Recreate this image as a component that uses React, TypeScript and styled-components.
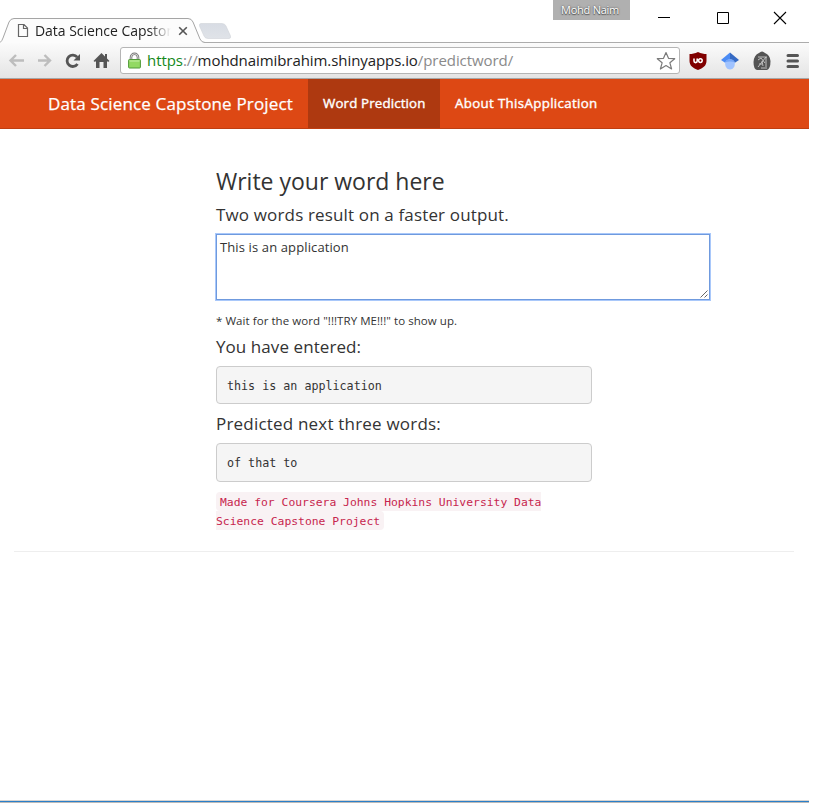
import React from 'react';
import styled, { createGlobalStyle } from 'styled-components';

const GlobalStyle = createGlobalStyle`
  * { box-sizing: border-box; }
  body { margin: 0; background: #fff; font-family: "Open Sans", "Noto Sans", sans-serif; }
  h2, h4, p, pre { margin: 0; font-weight: 400; }
  svg { display: block; flex: none; }
`;

const Window = styled.div`
  width: 809px;
  height: 803px;
  display: flex;
  flex-direction: column;
  background: #fff;
`;

const TitleBar = styled.header`
  height: 43px;
  display: flex;
  justify-content: space-between;
  background: #fff;
  border-bottom: 1px solid #acacac;
`;

const TabStrip = styled.div`
  display: flex;
  position: relative;
  height: 43px;
`;

const TabShape = styled.svg`
  position: absolute;
  left: 0;
  top: 0;
`;

const TabContent = styled.div`
  position: relative;
  display: flex;
  align-items: center;
  width: 203px;
  height: 25px;
  margin-top: 18px;
  padding-left: 17px;
`;

const TabTitle = styled.span`
  width: 136px;
  margin-left: 6px;
  overflow: hidden;
  white-space: nowrap;
  font-size: 14px;
  line-height: 20px;
  letter-spacing: -0.04px;
  color: #222;
  mask-image: linear-gradient(to right, #000 114px, transparent 136px);
`;

const TabClose = styled.svg`
  margin-left: 7px;
`;

const Controls = styled.div`
  display: flex;
  width: 256px;
`;

const UserBadge = styled.div`
  width: 77px;
  height: 20px;
  background: #b0b0b0;
  color: #fff;
  font-size: 11px;
  line-height: 20px;
  letter-spacing: -0.24px;
  padding-left: 8px;
  text-shadow: 0 0 2px #444, 0 1px 1px #555;
  white-space: nowrap;
`;

const WindowButtons = styled.div`
  display: flex;
  gap: 44px;
  padding: 11px 0 0 27px;
`;

const Toolbar = styled.div`
  height: 36px;
  display: flex;
  align-items: center;
  padding: 0 0 0 8px;
  background: linear-gradient(#fbfbfb, #e4e4e4);
  border-bottom: 1px solid #a6a6a6;
`;

const NavIcons = styled.div`
  display: flex;
  flex: none;
  align-items: center;
  gap: 12px;
  width: 112px;
`;

const AddressBar = styled.div`
  flex: none;
  width: 560px;
  height: 27px;
  display: flex;
  align-items: center;
  padding: 0 3px 0 7px;
  background: #fff;
  border: 1px solid #b5b5b5;
  border-radius: 3px;
`;

const Url = styled.span`
  flex: 1;
  margin-left: 6px;
  font-size: 15px;
  line-height: 22px;
  letter-spacing: -0.07px;
  white-space: nowrap;
  color: #222;
  position: relative;
  top: -1px;
`;

const UrlPart = styled.span<{ $tone: 'secure' | 'muted' }>`
  color: ${({ $tone }) => ($tone === 'secure' ? '#14891b' : '#8a8a8a')};
`;

const Extensions = styled.div`
  display: flex;
  align-items: center;
  gap: 14px;
  margin-left: 9px;
`;

const NavBar = styled.nav`
  height: 50px;
  display: flex;
  background: #dd4814;
  border-bottom: 1px solid #bf3e11;
  color: #fff;
  white-space: nowrap;
`;

const Brand = styled.span`
  width: 308px;
  padding-left: 48px;
  font-size: 17px;
  line-height: 49px;
  letter-spacing: 0.16px;
  -webkit-text-stroke: 0.25px #fff;
`;

const NavLink = styled.a<{ $active?: boolean; $spacing: number }>`
  width: ${({ $active }) => ($active ? '132px' : '173px')};
  padding-left: 15px;
  background: ${({ $active }) => ($active ? '#ae3910' : 'transparent')};
  font-size: 13.3px;
  line-height: 48px;
  letter-spacing: ${({ $spacing }) => $spacing}px;
  -webkit-text-stroke: 0.4px #fff;
`;

const Page = styled.main`
  flex: 1;
  padding-top: 37px;
  color: #333;
`;

const Form = styled.section`
  display: flex;
  flex-direction: column;
  margin-left: 216px;
  width: 495px;
  white-space: nowrap;
`;

const Title = styled.h2`
  height: 30px;
  font-size: 23px;
  line-height: 30px;
  letter-spacing: -0.01px;
`;

const Label = styled.h4<{ $top: number; $spacing: number }>`
  height: 20px;
  margin-top: ${({ $top }) => $top}px;
  font-size: 17px;
  line-height: 20px;
  letter-spacing: ${({ $spacing }) => $spacing}px;
`;

const WordInput = styled.textarea`
  width: 494px;
  height: 66px;
  margin-top: 9px;
  padding: 2px 3px;
  border: 1px solid #6f9ade;
  outline: 1px solid #a9c8fa;
  border-radius: 0;
  resize: none;
  overflow: hidden;
  font: 400 13px/20px "Open Sans", sans-serif;
  letter-spacing: 0.12px;
  color: #333;
  display: block;
`;

const InputFrame = styled.div`
  position: relative;
  width: 494px;
`;

const Grip = styled.svg`
  position: absolute;
  right: 2px;
  bottom: 2px;
`;

const Hint = styled.p`
  height: 16px;
  margin-top: 13px;
  font-size: 11.5px;
  line-height: 16px;
  letter-spacing: 0.06px;
`;

const Output = styled.pre<{ $height: number }>`
  width: 376px;
  height: ${({ $height }) => $height}px;
  margin-top: 9px;
  padding: 9px 10px;
  background: #f5f5f5;
  border: 1px solid #ccc;
  border-radius: 4px;
  font: 11.7px/20px "DejaVu Sans Mono", monospace;
`;

const Credit = styled.div`
  width: 350px;
  margin-top: 10px;
  font-family: "DejaVu Sans Mono", monospace;
  font-size: 11.36px;
  line-height: 19.5px;
`;

const Code = styled.code`
  padding: 2.5px 4px;
  border-radius: 4px;
  background: #f9f2f4;
  color: #c7254e;
  font-family: inherit;
  font-size: inherit;
`;

const Divider = styled.hr`
  width: 780px;
  height: 1px;
  margin: 20px 0 0 14px;
  border: 0;
  background: #eee;
`;

const BottomEdge = styled.footer`
  height: 3px;
  background: #2a7fc9;
  border-top: 1px solid #d6d3d0;
  border-bottom: 1px solid #bdbab7;
`;

export default function App() {
  return (
    <>
      <GlobalStyle />
      <Window>
        <TitleBar>
          <TabStrip>
            <TabShape width="240" height="43" viewBox="0 0 240 43">
              <defs>
                <linearGradient id="newTab" x2="0" y2="1">
                  <stop stopColor="#d8dce4" />
                  <stop offset="1" stopColor="#e0e3e8" />
                </linearGradient>
              </defs>
              <path d="M0 42.5Q2 41 3 38L9 22Q10.5 18.5 14 18.5H188Q191.5 18.5 193 22L200 39Q201.5 42.5 205 42.5V43H0Z" fill="#fcfcfc" />
              <path d="M0 42.5Q2 41 3 38L9 22Q10.5 18.5 14 18.5H188Q191.5 18.5 193 22L200 39Q201.5 42.5 205 42.5" fill="none" stroke="#a5a5a5" />
              <path d="M201 23.500H222Q225 23.500 226 26L230.500 36Q231 38.500 229 38.500H208Q205 38.500 204 36L199.500 26Q199 23.500 201 23.500Z" fill="url(#newTab)" stroke="#d0d3d8" strokeWidth=".6" />
            </TabShape>
            <TabContent>
              <svg width="12" height="15" viewBox="0 0 12 15" fill="none" stroke="#666" strokeWidth="1.2">
                <path d="M1.5 1.500H7L10.500 5V13.500H1.500Z M6.500 1.500V5.500H10.500" />
              </svg>
              <TabTitle>Data Science Capstone Project</TabTitle>
              <TabClose width="10" height="10" viewBox="0 0 10 10" stroke="#555" strokeWidth="1.6">
                <path d="M1.200 1.200L8.800 8.800M8.800 1.200L1.200 8.800" />
              </TabClose>
            </TabContent>
          </TabStrip>
          <Controls>
            <UserBadge>Mohd Naim</UserBadge>
            <WindowButtons>
              <svg width="14" height="14" viewBox="0 0 14 14" stroke="#000"><path d="M1 6.500H13" /></svg>
              <svg width="14" height="14" viewBox="0 0 14 14" stroke="#000" fill="none"><path d="M2.500 1.500H13.500V12.500H2.500Z" /></svg>
              <svg width="14" height="14" viewBox="0 0 14 14" stroke="#000" strokeWidth="1.100"><path d="M1 1L13 13M13 1L1 13" /></svg>
            </WindowButtons>
          </Controls>
        </TitleBar>
        <Toolbar>
          <NavIcons>
            <svg width="17" height="14" viewBox="0 0 17 14" fill="none" stroke="#bdbdbd" strokeWidth="2.400"><path d="M16 6.500H3M8 1L2.500 6.500L8 12" /></svg>
            <svg width="15" height="14" viewBox="0 0 15 14" fill="none" stroke="#bdbdbd" strokeWidth="2.400"><path d="M1 6.500H13M7.500 1L13 6.500L7.500 12" /></svg>
            <svg width="17" height="16" viewBox="0 0 17 16" fill="none" stroke="#555" strokeWidth="2.800">
              <path d="M13.200 4.200A5.700 5.700 0 1 0 13.500 11" />
              <path d="M16 1V7.500H9.500Z" fill="#555" stroke="none" />
            </svg>
            <svg width="17" height="17" viewBox="0 0 17 17" fill="#555">
              <path d="M8.500 1L12 4.500V2H14V6.500L16.500 9L15 10L14 9V16H10.500V10H6.500V16H3V9L2 10L.5 9Z" />
            </svg>
          </NavIcons>
          <AddressBar>
            <svg width="13" height="17" viewBox="0 0 13 17">
              <path d="M3 8V5.300A3.500 3.500 0 0 1 10 5.300V8" fill="none" stroke="#7a7a7a" strokeWidth="2.600" />
              <path d="M3 8V5.300A3.500 3.500 0 0 1 10 5.300V8" fill="none" stroke="#d5d5d5" />
              <rect x=".6" y="7.500" width="11.800" height="8.500" rx=".8" fill="#93d963" stroke="#4f9936" />
              <path d="M1.500 9H11.500" stroke="#c5efaa" />
            </svg>
            <Url>
              <UrlPart $tone="secure">https</UrlPart><UrlPart $tone="muted">://</UrlPart>mohdnaimibrahim.shinyapps.io<UrlPart $tone="muted">/predictword/</UrlPart>
            </Url>
            <svg width="20" height="20" viewBox="0 0 20 20" fill="#fff" stroke="#7b7b7b" strokeWidth="1.200" strokeLinejoin="round">
              <path d="M10 1.500L12.500 7.300L18.700 7.700L13.900 11.800L15.600 18L10 14.600L4.400 18L6.100 11.800L1.300 7.700L7.500 7.300Z" />
            </svg>
          </AddressBar>
          <Extensions>
            <svg width="18" height="20" viewBox="0 0 18 20">
              <path d="M9 1C6 2.600 3 3 .5 3V10C.5 14.500 4 17.300 9 19C14 17.300 17.500 14.500 17.500 10V3C15 3 12 2.600 9 1Z" fill="#800000" />
              <path d="M5 7.500V10A1.600 1.600 0 0 0 8.200 10V7.500" fill="none" stroke="#fff" strokeWidth="1.600" />
              <circle cx="11.400" cy="9.600" r="1.800" fill="none" stroke="#fff" strokeWidth="1.500" />
            </svg>
            <svg width="18" height="18" viewBox="0 0 18 18">
              <path d="M9 .5L0 8L4.500 11L9 8Z" fill="#4b8bf4" />
              <path d="M9 .5L18 8L13.500 11L9 8Z" fill="#356ac3" />
              <path d="M4.200 10.200A5.300 5.300 0 0 1 13.800 10.200Q14.500 17 9 17.500Q3.500 17 4.200 10.200Z" fill="#a0c3ff" />
              <path d="M4.200 10.200A5.300 5.300 0 0 1 13.800 10.200Q9 9 4.200 10.200Z" fill="#75a6f7" />
            </svg>
            <svg width="18" height="20" viewBox="0 0 18 20">
              <path d="M6 2Q9 -1 12 2Q17 4 17.500 10Q17.500 18 14 19H4Q.5 18 .5 11Q1 4 6 2Z" fill="#545454" />
              <path d="M5 6H14M13 6V16M13 6L5 16M5 9L8 7L12 12M6 13H9M8 17H14M9 10L10 15" fill="none" stroke="#c9c9c9" strokeWidth=".9" />
            </svg>
            <svg width="17" height="18" viewBox="0 0 17 18" stroke="#555" strokeWidth="3" strokeLinecap="round">
              <path d="M3 3.500H12.500M3 9H12.500M3 14.500H12.500" />
            </svg>
          </Extensions>
        </Toolbar>
        <NavBar>
          <Brand>Data Science Capstone Project</Brand>
          <NavLink $active $spacing={0.15}>Word Prediction</NavLink>
          <NavLink $spacing={0.34}>About ThisApplication</NavLink>
        </NavBar>
        <Page>
          <Form>
            <Title>Write your word here</Title>
            <Label $top={9} $spacing={0.15}>Two words result on a faster output.</Label>
            <InputFrame>
              <WordInput defaultValue="This is an application" />
              <Grip width="8" height="8" viewBox="0 0 8 8" stroke="#555" strokeWidth=".9">
                <path d="M.5 7.500L7.500 .5M4.500 7.500L7.500 4.500" />
              </Grip>
            </InputFrame>
            <Hint>* Wait for the word "!!!TRY ME!!!" to show up.</Hint>
            <Label $top={8} $spacing={0.07}>You have entered:</Label>
            <Output $height={38}>this is an application</Output>
            <Label $top={10} $spacing={0.2}>Predicted next three words:</Label>
            <Output $height={39}>of that to</Output>
            <Credit>
              <Code>Made for Coursera Johns Hopkins University Data<br />Science Capstone Project</Code>
            </Credit>
          </Form>
          <Divider />
        </Page>
        <BottomEdge />
      </Window>
    </>
  );
}
